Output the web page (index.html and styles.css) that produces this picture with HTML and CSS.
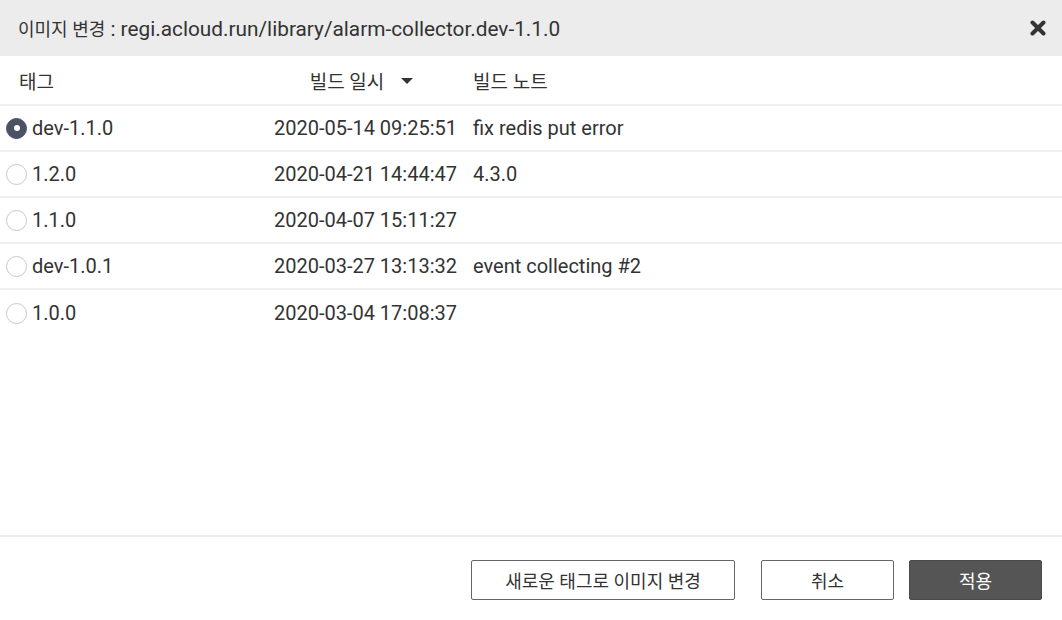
FILE: index.html
```html
<!DOCTYPE html>
<html lang="ko">
<head>
<meta charset="utf-8">
<link rel="stylesheet" href="styles.css">
</head>
<body>
<div class="dialog">
  <div class="dlg-header">
    <span class="dlg-title"><span class="ko">이미지 변경</span> : regi.acloud.run/library/alarm-collector.dev-1.1.0</span>
    <button class="close" aria-label="close">
      <svg width="16" height="16" viewBox="0 0 16 16"><path d="M2.5 2.5 L13.5 13.5 M13.5 2.5 L2.5 13.5" stroke="#333" stroke-width="4" stroke-linecap="round"/></svg>
    </button>
  </div>
  <div class="table">
    <div class="row head">
      <div class="c-tag"><span class="ko-h">태그</span></div>
      <div class="c-date center"><span class="ko-h">빌드 일시</span> <svg class="caret" width="12" height="7" viewBox="0 0 12 7"><path d="M0 0 L12 0 L6 6 Z" fill="#333"/></svg></div>
      <div class="c-note"><span class="ko-h">빌드 노트</span></div>
    </div>
    <div class="row">
      <div class="c-tag"><span class="radio on"></span>dev-1.1.0</div>
      <div class="c-date">2020-05-14 09:25:51</div>
      <div class="c-note">fix redis put error</div>
    </div>
    <div class="row">
      <div class="c-tag"><span class="radio"></span>1.2.0</div>
      <div class="c-date">2020-04-21 14:44:47</div>
      <div class="c-note">4.3.0</div>
    </div>
    <div class="row">
      <div class="c-tag"><span class="radio"></span>1.1.0</div>
      <div class="c-date">2020-04-07 15:11:27</div>
      <div class="c-note"></div>
    </div>
    <div class="row">
      <div class="c-tag"><span class="radio"></span>dev-1.0.1</div>
      <div class="c-date">2020-03-27 13:13:32</div>
      <div class="c-note">event collecting #2</div>
    </div>
    <div class="row last">
      <div class="c-tag"><span class="radio"></span>1.0.0</div>
      <div class="c-date">2020-03-04 17:08:37</div>
      <div class="c-note"></div>
    </div>
  </div>
  <div class="spacer"></div>
  <div class="footer">
    <button class="btn wide">새로운 태그로 이미지 변경</button>
    <button class="btn">취소</button>
    <button class="btn primary">적용</button>
  </div>
</div>
</body>
</html>
```
FILE: styles.css
```css
html, body {
  margin: 0;
  padding: 0;
  background: #fff;
}
body {
  font-family: Roboto, "Noto Sans CJK KR", sans-serif;
  color: #333;
  font-size: 20px;
}
.ko {
  font-size: 18px;
}
.ko-h {
  font-size: 19px;
}
.dialog {
  width: 1062px;
  height: 620px;
  display: flex;
  flex-direction: column;
}
.dlg-header {
  height: 56px;
  background: #ececec;
  display: flex;
  align-items: center;
  justify-content: space-between;
  padding: 0 16px 0 18px;
  box-sizing: border-box;
}
.dlg-title {
  font-size: 20.8px;
  color: #333;
}
.close {
  border: 0;
  background: none;
  padding: 0;
  width: 16px;
  height: 16px;
  display: flex;
}
.table {
  display: flex;
  flex-direction: column;
}
.row {
  display: grid;
  grid-template-columns: 258px 207px 1fr;
  height: 46px;
  align-items: center;
  border-bottom: 2px solid #efefef;
  box-sizing: border-box;
}
.row.head {
  height: 50px;
}
.row.last {
  border-bottom: 0;
}
.c-tag {
  display: flex;
  align-items: center;
  padding-left: 6px;
}
.row.head .c-tag {
  padding-left: 19px;
}
.c-date {
  text-align: right;
  padding-right: 8px;
}
.c-date.center {
  text-align: center;
  padding-right: 0;
  display: flex;
  align-items: center;
  justify-content: center;
}
.caret {
  margin-left: 17px;
  margin-top: 3px;
}
.c-note {
  padding-left: 8px;
}
.radio {
  flex: none;
  width: 21px;
  height: 21px;
  border: 1.5px solid #c8c8c8;
  border-radius: 50%;
  box-sizing: border-box;
  margin-right: 5px;
  position: relative;
  background: #fff;
}
.radio.on {
  background: #4b5263;
  border-color: #4b5263;
}
.radio.on::after {
  content: "";
  position: absolute;
  width: 6px;
  height: 6px;
  border-radius: 50%;
  background: #fff;
  left: 50%;
  top: 50%;
  transform: translate(-50%, -50%);
}
.spacer {
  flex: 1;
}
.footer {
  border-top: 2px solid #ececec;
  padding: 23px 20px 20px;
  display: flex;
  justify-content: flex-end;
}
.btn {
  font-family: Roboto, "Noto Sans CJK KR", sans-serif;
  font-size: 18px;
  color: #333;
  height: 40px;
  width: 133px;
  background: #fff;
  border: 1.5px solid #666;
  border-radius: 2px;
  margin-left: 15px;
  padding: 0;
}
.btn.wide {
  width: 264px;
  margin-left: 0;
  margin-right: 11px;
}
.btn.primary {
  background: #555;
  border-color: #4a4a4a;
  color: #fff;
}
```
